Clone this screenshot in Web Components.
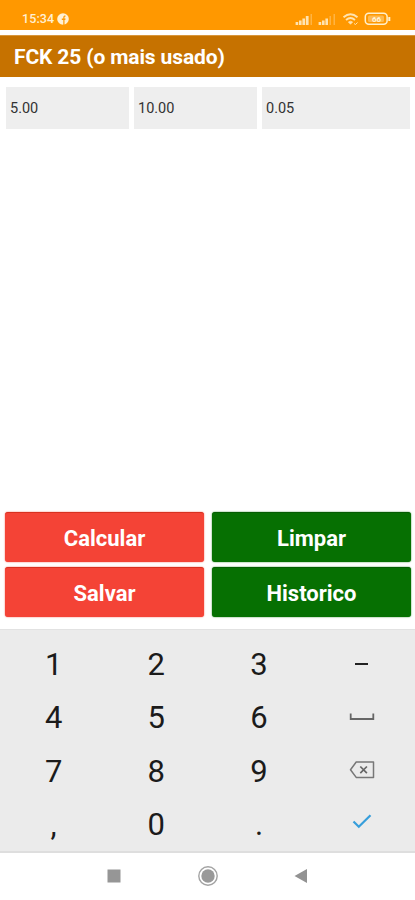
<!DOCTYPE html>
<html lang="pt">
<head>
<meta charset="utf-8">
<title>FCK 25</title>
<style>
  html, body { margin: 0; height: 100%; background: #fff; }
  body { font-family: Roboto, "Liberation Sans", sans-serif; }
</style>
</head>
<body>
<app-screen>
  <status-bar slot="status" time="15:34"></status-bar>
  <title-bar slot="title">FCK 25 (o mais usado)</title-bar>
  <value-field slot="fields">5.00</value-field>
  <value-field slot="fields">10.00</value-field>
  <value-field slot="fields">0.05</value-field>
  <action-button slot="actions">Calcular</action-button>
  <action-button slot="actions" tone="green">Limpar</action-button>
  <action-button slot="actions">Salvar</action-button>
  <action-button slot="actions" tone="green">Historico</action-button>
  <number-pad slot="pad"></number-pad>
  <nav-bar slot="nav"></nav-bar>
</app-screen>
<script>
class BaseElement extends HTMLElement {
  connectedCallback() {
    if (this.shadowRoot) return
    this.attachShadow({ mode: "open" }).innerHTML = this.template()
  }
}

class AppScreen extends BaseElement {
  template() {
    return `
      <style>
        :host { display: flex; flex-direction: column; height: 900px; width: 415px; overflow: hidden; }
        .fields { display: grid; grid-template-columns: 123px 123px 148px; gap: 5px; padding: 10px 0 0 6px; }
        .actions { display: grid; grid-template-columns: 199px 199px; gap: 5px 8px; margin-top: auto; padding: 0 0 12px 5px; }
      </style>
      <slot name="status"></slot>
      <slot name="title"></slot>
      <div class="fields"><slot name="fields"></slot></div>
      <div class="actions"><slot name="actions"></slot></div>
      <slot name="pad"></slot>
      <slot name="nav"></slot>
    `
  }
}

class StatusBar extends BaseElement {
  template() {
    return `
      <style>
        :host {
          align-items: flex-start; background: #ff9800; box-sizing: border-box; color: #fff0d4;
          display: flex; height: 30px; padding: 12px 24px 0 22px; flex: none;
        }
        time { font-size: 12.5px; font-weight: 500; line-height: 14px; letter-spacing: 0.1px; }
        svg { display: block; }
        .badge { margin: 0.5px 0 0 3px; }
        .icons { margin-left: auto; }
      </style>
      <time>${this.getAttribute("time")}</time>
      <svg class="badge" width="12" height="12" viewBox="0 0 12 12">
        <circle cx="6" cy="6" r="5.8" fill="#fff0d4"/>
        <path d="M6.3 12V7H4.8V5.4h1.5V4.3c0-1.4.8-2 2.2-1.9v1.4c-.9 0-1 .2-1 .7v.9h1.1L8.3 7H7.5v5z" fill="#ff9800"/>
      </svg>
      <svg class="icons" width="96" height="14" viewBox="295 12 96 14">
        <g fill="#ffe3b0">
          <path d="M295.6 22h2.6v3h-2.6zM299 20.5h2.6V25H299zM302.4 18.5h2.6V25h-2.6zM305.8 16h2.8v9h-2.8z"/>
          <path d="M318.6 22h2.6v3h-2.6zM322 20.5h2.6V25H322zM325.4 18.5h2.6V25h-2.6z"/>
          <path d="M310.5 14h1.5v11h-1.5zM329.5 16h1.5v9h-1.5zM333.5 14h1.5v11h-1.5z" opacity=".38"/>
        </g>
        <g fill="none" stroke="#ffe3b0">
          <path d="M343.5 17.2q7-6 14 0M346 20q4.5-3.8 9 0" stroke-width="1.9"/>
          <path d="M348.3 22q2.2-1.7 4.4 0l-2.2 2.3z" fill="#ffe3b0" stroke-width=".6"/>
          <path d="M354 23.5l1.5 1 2-2" stroke-width="1"/>
          <rect x="365.3" y="13.3" width="21.8" height="11" rx="3.5" stroke="#fff0cc" stroke-width="1.5"/>
          <path d="M389.3 17v4" stroke="#fff0cc" stroke-width="2"/>
        </g>
        <rect x="368" y="15.5" width="16" height="6.6" rx="1.5" fill="#ffe3b0" opacity=".45"/>
        <text x="376.5" y="22" font-size="8" font-weight="700" text-anchor="middle" fill="#fff3d8">66</text>
      </svg>
    `
  }
}

class TitleBar extends BaseElement {
  template() {
    return `
      <style>
        :host {
          align-items: center; background: #c67200; border-top: 1px solid #d8963c; box-sizing: border-box;
          color: #fff; display: flex; flex: none; font-size: 21px; font-weight: 700; letter-spacing: -0.13px;
          height: 42px; margin-top: 5px; padding: 0 0 0 14px; white-space: nowrap;
        }
      </style>
      <span><slot></slot></span>
    `
  }
}

class ValueField extends BaseElement {
  template() {
    return `
      <style>
        :host {
          align-items: center; background: #eee; box-sizing: border-box; color: #333;
          display: flex; font-size: 14.5px; height: 42px; padding-left: 4px;
        }
      </style>
      <slot></slot>
    `
  }
}

class ActionButton extends BaseElement {
  template() {
    const green = this.getAttribute("tone") === "green"
    return `
      <style>
        :host { display: block; }
        button {
          appearance: none; background: ${green ? "#067002" : "#f44336"}; border: 0;
          border-top: 1px solid ${green ? "#045c02" : "#d8301f"}; border-radius: 3px;
          box-shadow: 0 0 1.5px ${green ? "#067002" : "#f44336"};
          color: #fff; display: block; font: 700 22px/1 Roboto, sans-serif;
          height: 50px; padding: 2px 0 0; width: 100%;
        }
      </style>
      <button type="button"><slot></slot></button>
    `
  }
}

const padIcons = {
  space: `<path d="M-11.3-4.5V1h22.6v-5.5" stroke="#666" stroke-width="1.8"/>`,
  erase: `<path d="M-5.8-9H11.5V6.4H-5.8L-11.5-1.3z" stroke="#777" stroke-width="1.5" stroke-linejoin="round"/>
    <path d="M-1.7-4.5l6.6 6.6M4.9-4.5l-6.6 6.6" stroke="#666" stroke-width="1.7"/>`,
  done: `<path d="M-8.5-3.5l5.3 5.2L8.5-9.8" stroke="#369edb" stroke-width="2.2"/>`,
}

class NumberPad extends BaseElement {
  template() {
    const keys = ["1", "2", "3", "minus", "4", "5", "6", "space", "7", "8", "9", "erase", ",", "0", ".", "done"]
    return `
      <style>
        :host {
          background: #ebebeb; border-bottom: 2px solid #dedede; border-top: 1px solid #e2e2e2;
          box-sizing: border-box; color: #1b1b1b; display: grid; flex: none;
          grid-template: repeat(4, 53.5px) / repeat(4, 102.7px);
          height: 224px; padding: 7.5px 0 0 2.3px; font-size: 31px;
        }
        div { align-items: center; display: flex; justify-content: center; line-height: 1; }
        svg { display: block; overflow: visible; }
        .minus { background: #222; height: 2px; width: 13px; }
      </style>
      ${keys.map((key) => `<div>${this.face(key)}</div>`).join("")}
    `
  }

  face(key) {
    if (key === "minus") return `<span class="minus"></span>`
    if (!padIcons[key]) return `<span>${key}</span>`
    return `<svg width="26" height="20" viewBox="-13 -10 26 20" fill="none">${padIcons[key]}</svg>`
  }
}

class NavBar extends BaseElement {
  template() {
    return `
      <style>
        :host {
          align-items: center; background: #fff; box-sizing: border-box; display: flex; flex: none;
          height: 47px; padding: 0 0 2px 107px;
        }
        svg { display: block; }
        .home { margin-left: 76px; }
        .back { margin-left: 75px; }
      </style>
      <svg width="14" height="14"><rect x=".5" y=".5" width="13" height="13" fill="#969696"/></svg>
      <svg class="home" width="22" height="22" viewBox="-11 -11 22 22">
        <circle r="9.2" fill="none" stroke="#a3a3a3" stroke-width="1.4"/>
        <circle r="6.7" fill="#999"/>
      </svg>
      <svg class="back" width="14" height="16"><path d="M.5 8L13 1v14z" fill="#929292"/></svg>
    `
  }
}

customElements.define("app-screen", AppScreen)
customElements.define("status-bar", StatusBar)
customElements.define("title-bar", TitleBar)
customElements.define("value-field", ValueField)
customElements.define("action-button", ActionButton)
customElements.define("number-pad", NumberPad)
customElements.define("nav-bar", NavBar)
</script>
</body>
</html>
